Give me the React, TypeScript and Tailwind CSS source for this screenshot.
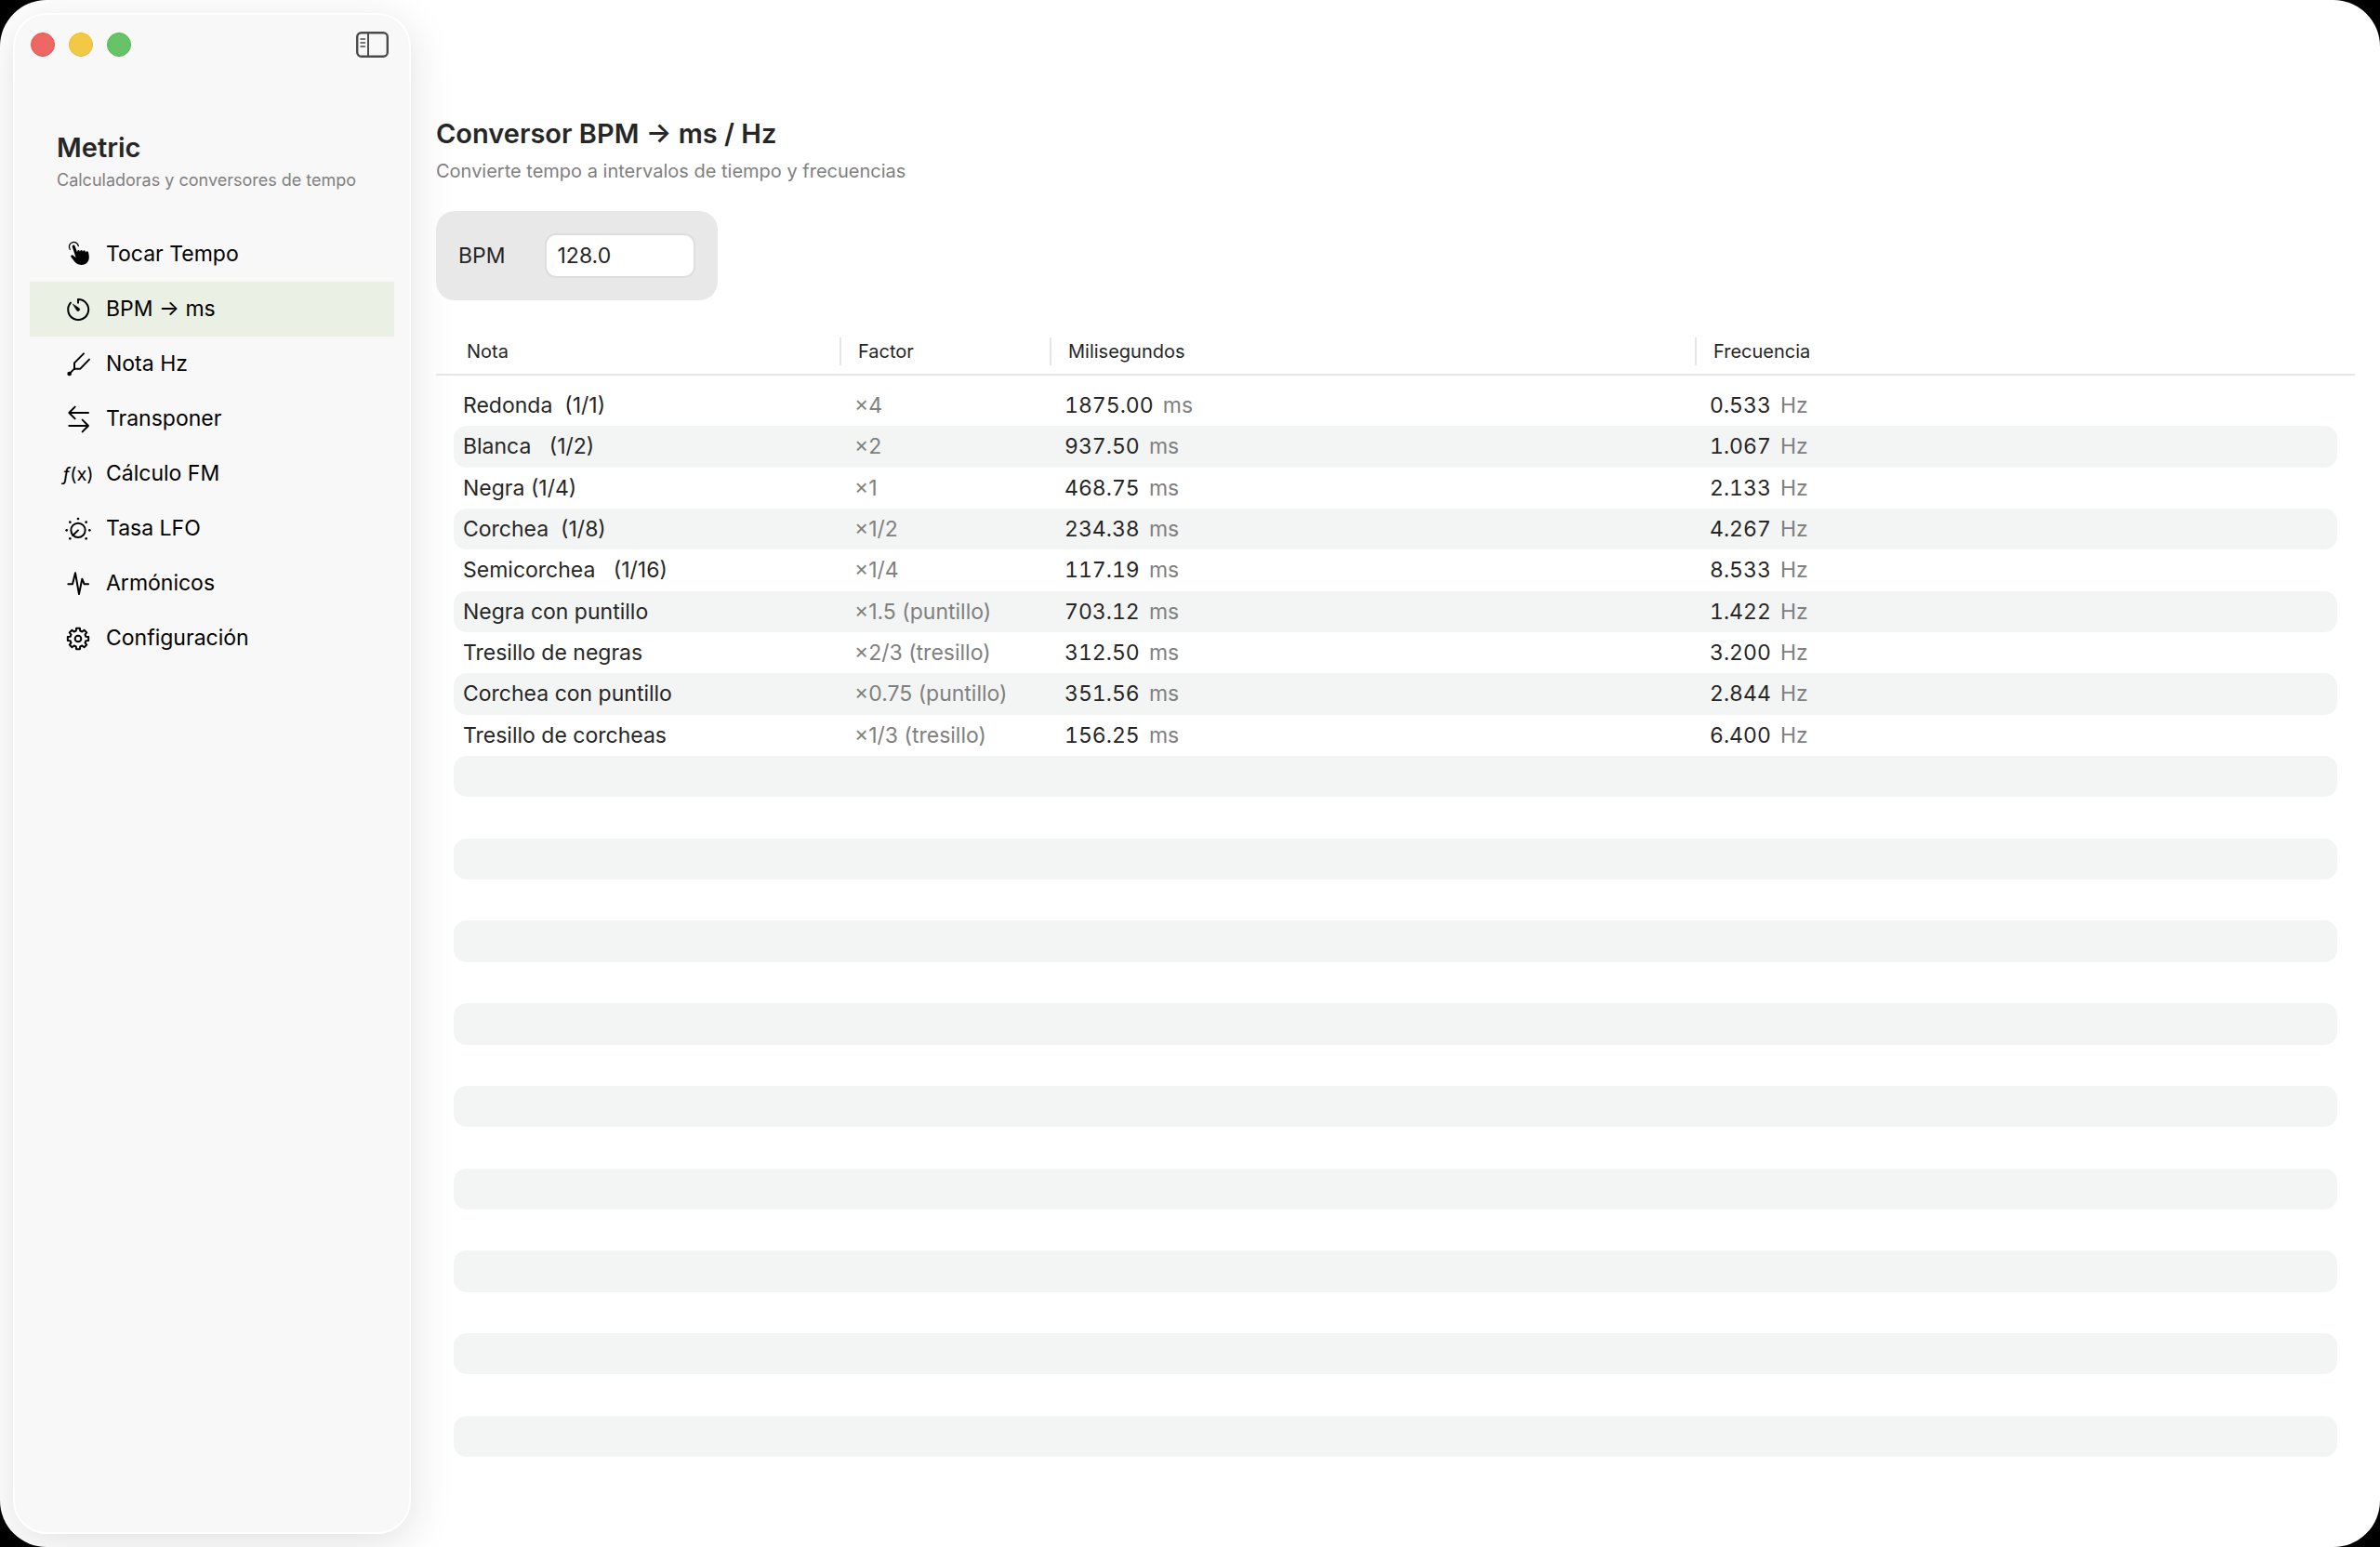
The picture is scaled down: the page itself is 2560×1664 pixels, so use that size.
import { useState } from "react";
import type { ReactNode } from "react";

type NavItem = { label: string; icon: ReactNode };
type Note = { name: string; factor: string; ms: string; hz: string };

function Icon(props: { children: ReactNode }) {
  return (
    <svg
      viewBox="0 0 96 96"
      className="size-8"
      fill="none"
      stroke="currentColor"
      strokeWidth={6}
      strokeLinecap="round"
      strokeLinejoin="round"
      aria-hidden="true"
    >
      {props.children}
    </svg>
  );
}

function gearPath() {
  const points: string[] = [];
  for (let i = 0; i < 8; i++) {
    const mid = (i * 45 - 90) * (Math.PI / 180);
    const steps: [number, number][] = [
      [-0.26, 26],
      [-0.17, 34],
      [0.17, 34],
      [0.26, 26],
    ];
    steps.forEach(([offset, radius]) => {
      const x = 48 + Math.cos(mid + offset) * radius;
      const y = 48 + Math.sin(mid + offset) * radius;
      points.push(`${x.toFixed(1)} ${y.toFixed(1)}`);
    });
  }
  return `M${points.join("L")}Z`;
}

const navItems: NavItem[] = [
  {
    label: "Tocar Tempo",
    icon: (
      <Icon>
        <path d="M22 31A15 15 0 1 1 49 20" strokeWidth={4} />
        <path
          d="M29 22c-1-6 7-8 9-2l7 20l1-5c1-3 6-3 7 0l1 4l1-4c1-3 6-3 7 0l1 4l1-3c1-3 6-3 7 0l1 5l1-2c2-4 7-3 8 1c2 8 3 15 2 21c-2 13-12 20-24 20c-13 0-20-6-25-14l-9-12c-2-4 3-8 7-5l9 8Z"
          fill="currentColor"
          stroke="none"
        />
      </Icon>
    ),
  },
  {
    label: "BPM → ms",
    icon: (
      <Icon>
        <path d="M48 26V15a33 33 0 1 1-24 11" />
        <path d="M32 31l20 13a5.500 5.500 0 0 1-7 8Z" fill="currentColor" strokeWidth={2} />
      </Icon>
    ),
  },
  {
    label: "Nota Hz",
    icon: (
      <Icon>
        <path d="M66 13L36 43v19h19l29-30" />
        <path d="M36 62L21 77" />
        <circle cx="20" cy="78" r="4" fill="currentColor" />
      </Icon>
    ),
  },
  {
    label: "Transponer",
    icon: (
      <Icon>
        <path d="M81 27H19M38 8L19 27l19 19" />
        <path d="M19 69h62M62 50l19 19l-19 19" />
      </Icon>
    ),
  },
  {
    label: "Cálculo FM",
    icon: (
      <span className="text-xl leading-8">
        <i>ƒ</i>(x)
      </span>
    ),
  },
  {
    label: "Tasa LFO",
    icon: (
      <Icon>
        <circle cx="48" cy="52" r="23" />
        <path d="M48 52L31 69" />
        <g fill="currentColor" stroke="none">
          <circle cx="48" cy="15" r="4" />
          <circle cx="22" cy="26" r="4" />
          <circle cx="74" cy="26" r="4" />
          <circle cx="11" cy="52" r="4" />
          <circle cx="85" cy="52" r="4" />
          <circle cx="22" cy="79" r="4" />
          <circle cx="74" cy="79" r="4" />
        </g>
      </Icon>
    ),
  },
  {
    label: "Armónicos",
    icon: (
      <Icon>
        <path d="M16 49h14l9-36l12 68l10-49l7 17h13" />
      </Icon>
    ),
  },
  {
    label: "Configuración",
    icon: (
      <Icon>
        <path d={gearPath()} />
        <circle cx="48" cy="48" r="10" />
      </Icon>
    ),
  },
];

const notes: Note[] = [
  { name: "Redonda  (1/1)", factor: "×4", ms: "1875.00", hz: "0.533" },
  { name: "Blanca   (1/2)", factor: "×2", ms: "937.50", hz: "1.067" },
  { name: "Negra (1/4)", factor: "×1", ms: "468.75", hz: "2.133" },
  { name: "Corchea  (1/8)", factor: "×1/2", ms: "234.38", hz: "4.267" },
  { name: "Semicorchea   (1/16)", factor: "×1/4", ms: "117.19", hz: "8.533" },
  { name: "Negra con puntillo", factor: "×1.5 (puntillo)", ms: "703.12", hz: "1.422" },
  { name: "Tresillo de negras", factor: "×2/3 (tresillo)", ms: "312.50", hz: "3.200" },
  { name: "Corchea con puntillo", factor: "×0.75 (puntillo)", ms: "351.56", hz: "2.844" },
  { name: "Tresillo de corcheas", factor: "×1/3 (tresillo)", ms: "156.25", hz: "6.400" },
];

const emptyRows = Array.from({ length: 17 }, (_, i) => i);

function Sidebar(props: { selected: string; onSelect: (label: string) => void }) {
  const { selected, onSelect } = props;

  return (
    <aside className="m-3.5 w-[428px] shrink-0 rounded-[36px] border-2 border-white bg-[#f8f8f8] shadow-[0_10px_48px_rgba(0,0,0,0.12)]">
      <div className="flex items-center justify-between pt-[18px] pr-[22px] pl-[17px]">
        <div className="flex gap-[15px]">
          <button aria-label="Cerrar" className="size-[26px] rounded-full border border-[#e8504f] bg-[#ed6765]" />
          <button aria-label="Minimizar" className="size-[26px] rounded-full border border-[#eebb2c] bg-[#f2c944]" />
          <button aria-label="Ampliar" className="size-[26px] rounded-full border border-[#4fb853] bg-[#66c368]" />
        </div>
        <button aria-label="Mostrar u ocultar la barra lateral" className="text-[#4b4b4b]">
          <svg viewBox="0 0 35 28" className="h-7 w-[35px]" fill="none" stroke="currentColor" strokeWidth={2.4}>
            <rect x="1.200" y="1.200" width="32.600" height="25.600" rx="4.500" />
            <path d="M13 1v26" strokeWidth={2} />
            <path d="M5 8h4.500M5 12h4.500M5 16h4.500" strokeWidth={1.500} strokeLinecap="round" />
          </svg>
        </button>
      </div>
      <div className="mt-[79px] pl-[45px]">
        <h1 className="text-[29px] leading-9 font-semibold text-[#262626]">Metric</h1>
        <p className="text-lg leading-[34px] text-[#808080]">Calculadoras y conversores de tempo</p>
      </div>
      <nav className="mt-[33px] px-4">
        {navItems.map((item) => (
          <button
            key={item.label}
            onClick={() => onSelect(item.label)}
            className={
              item.label === selected
                ? "flex h-[59px] w-full items-center gap-3.5 bg-[#eaf1e4] pl-9"
                : "flex h-[59px] w-full items-center gap-3.5 pl-9"
            }
          >
            <span className="flex w-8 justify-center">{item.icon}</span>
            <span className="text-[23px]">{item.label}</span>
          </button>
        ))}
      </nav>
    </aside>
  );
}

function NotesTable() {
  return (
    <table className="mt-10 flex flex-1 flex-col text-left">
      <thead className="block border-b-2 border-[#e5e5e5] px-[19px] pb-[9px]">
        <tr className="grid grid-cols-[415px_226px_694fr_691fr] text-xl leading-[30px]">
          <th className="pl-3.5 font-normal">Nota</th>
          <th className="border-l-2 border-[#e5e5e5] pl-[18px] font-normal">Factor</th>
          <th className="border-l-2 border-[#e5e5e5] pl-[18px] font-normal">Milisegundos</th>
          <th className="border-l-2 border-[#e5e5e5] pl-[18px] font-normal">Frecuencia</th>
        </tr>
      </thead>
      <tbody className="flex flex-1 flex-col px-[19px] pt-2.5 text-[23px]">
        {notes.map((note) => (
          <tr
            key={note.name}
            className="grid flex-1 grid-cols-[415px_226px_694fr_691fr] items-center rounded-[14px] even:bg-[#f3f5f4]"
          >
            <td className="pl-2.5 whitespace-pre">{note.name}</td>
            <td className="pl-4 whitespace-nowrap text-[#808080]">{note.factor}</td>
            <td className="pl-4 tabular-nums">
              {note.ms} <span className="pl-1 text-[#808080]">ms</span>
            </td>
            <td className="pl-4 tabular-nums">
              {note.hz} <span className="pl-1 text-[#808080]">Hz</span>
            </td>
          </tr>
        ))}
        {emptyRows.map((row) => (
          <tr key={row} className="flex-1 rounded-[14px] even:bg-[#f3f5f4]" />
        ))}
      </tbody>
    </table>
  );
}

export default function App() {
  const [selected, setSelected] = useState("BPM → ms");
  const [bpm, setBpm] = useState("128.0");

  return (
    <div className="min-h-screen bg-black font-['Inter',sans-serif]">
      <div className="flex min-h-screen overflow-hidden rounded-[50px] bg-white">
        <Sidebar selected={selected} onSelect={setSelected} />
        <main className="z-10 flex flex-1 flex-col pt-[124px] pr-[27px] pb-[97px] pl-[13px] text-[#262626]">
          <h2 className="text-[29px] leading-10 font-semibold">Conversor BPM → ms / Hz</h2>
          <p className="text-xl leading-10 text-[#808080]">
            Convierte tempo a intervalos de tiempo y frecuencias
          </p>
          <div className="mt-[23px] flex h-24 items-center gap-[42px] self-start rounded-[20px] bg-[#e8e8e8] px-6">
            <label htmlFor="bpm" className="text-[23px]">
              BPM
            </label>
            <input
              id="bpm"
              type="text"
              value={bpm}
              onChange={(e) => setBpm(e.target.value)}
              className="h-12 w-[162px] rounded-xl border-2 border-[#dedede] bg-white px-3 text-[23px] outline-none"
            />
          </div>
          <NotesTable />
        </main>
      </div>
    </div>
  );
}
